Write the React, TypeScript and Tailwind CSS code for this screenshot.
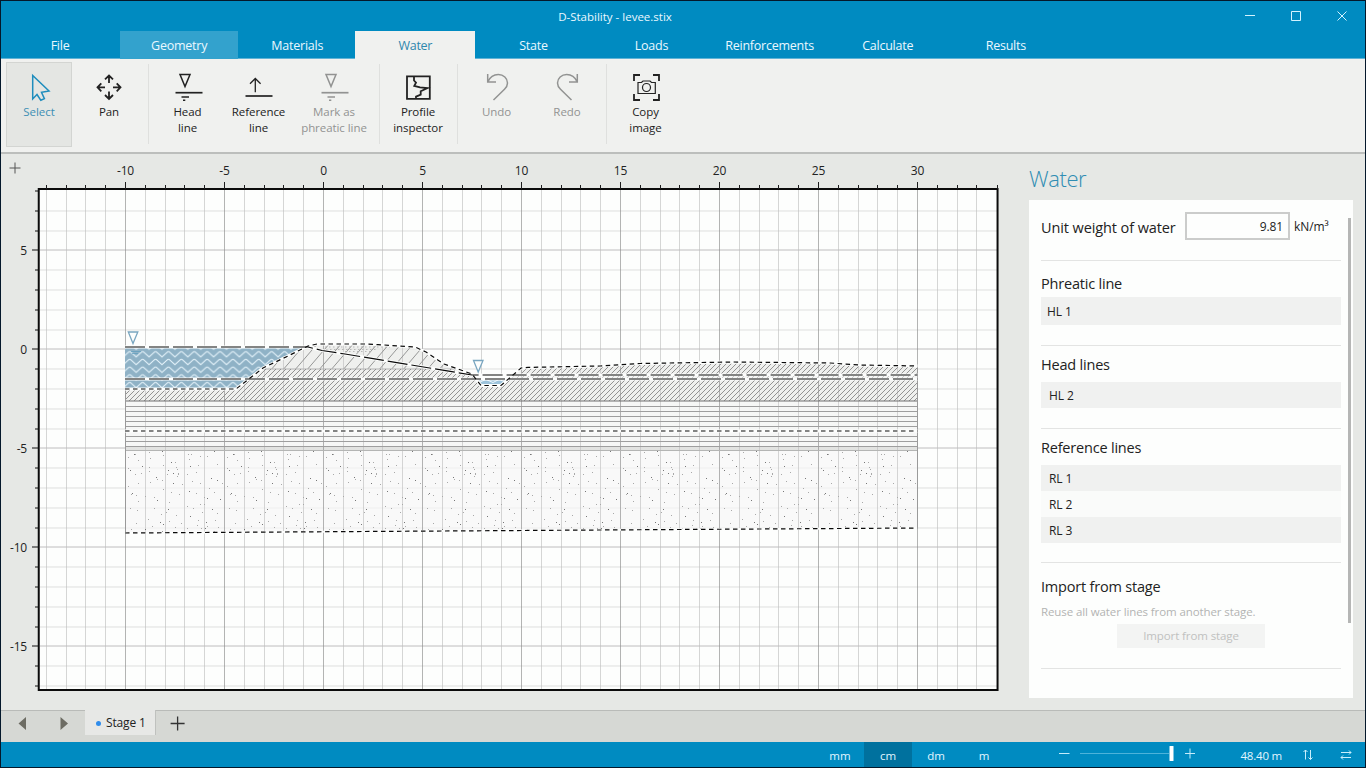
import React from "react";

const majorsX = [-10, -5, 0, 5, 10, 15, 20, 25, 30];
const majorsY = [5, 0, -5, -10, -15];
const toX = (m: number) => Math.round(323 + m * 19.8) + 0.5;
const toY = (m: number) => Math.round(349.4 - m * 19.8);
const range = (a: number, b: number) => Array.from({ length: b - a + 1 }, (_, i) => a + i);

const sandDots: [number, number][] = [
  [9, 4], [3, 7], [24, 2], [10, 4], [37, 1], [63, 4], [66, 4], [82, 6], [89, 1], [13, 10], [25, 8], [38, 5], [46, 12], [50, 12],
  [64, 9], [75, 6], [17, 16], [24, 17], [38, 15], [51, 17], [65, 16], [73, 15], [92, 14], [3, 18], [5, 20], [10, 24], [16, 23],
  [24, 21], [43, 20], [52, 19], [53, 23], [42, 24], [48, 23], [62, 24], [71, 22], [32, 29], [31, 27], [37, 30], [52, 26], [53, 24],
  [86, 28], [3, 36], [13, 33], [25, 32], [48, 33], [57, 34], [67, 31], [75, 33], [92, 30], [97, 33], [38, 39], [46, 42], [64, 41],
  [84, 38], [6, 44], [11, 45], [7, 43], [20, 46], [29, 47], [13, 51], [32, 50], [44, 52], [54, 44], [71, 43], [82, 48], [79, 47],
  [75, 54], [89, 42], [95, 49], [5, 58], [12, 60], [29, 58], [43, 59], [62, 56], [68, 58], [79, 54], [87, 59], [36, 64], [41, 62],
  [51, 65], [65, 66], [77, 62], [92, 63], [23, 69], [35, 72], [44, 71], [56, 73], [73, 70], [81, 72], [90, 70], [11, 73], [27, 76],
  [38, 74], [50, 77], [62, 78], [72, 75], [80, 78], [82, 76], [93, 77], [6, 79], [20, 79], [76, 78],
];

const surface =
  "M125 389H236L263 368L288 356L308 346L317 344H365L378 344.6L415 347L426 352L444 364L472 374L481 385.5H501L521 368L528 367.4L600 366L640 363.5L732 362L830 363L860 365L917.5 366";
const headLine = "M125 347H308L322 350.5L345 354L472 375H917.5";

function Section() {
  return (
    <svg className="block h-[556px] w-[1028px] shrink-0 font-['Open_Sans','Noto_Sans',sans-serif]" viewBox="1 154 1028 556">
      <defs>
        <pattern id="dense" width="5" height="5" patternUnits="userSpaceOnUse">
          <path d="M-1 6L6 -1M-1 1L1 -1M4 6L6 4" stroke="#898989" strokeWidth="0.9" />
        </pattern>
        <pattern id="wide" width="12" height="14" patternUnits="userSpaceOnUse">
          <path d="M-1.2 15.4L13.2 -1.4M-1.2 1.4L1.2 -1.4M10.8 15.4L13.2 12.6" stroke="#8b8b8b" strokeWidth="0.9" />
        </pattern>
        <pattern id="waves" x="123.3" y="351.4" width="12.9" height="7.7" patternUnits="userSpaceOnUse">
          {[-7.7, 0, 7.7].map((dy) => (
            <path
              key={dy}
              transform={`translate(0 ${dy})`}
              d="M-1 4.6L0 5.5L5.2 0.8Q6.45 -0.3 7.7 0.8L12.9 5.5L13.9 4.6"
              fill="none"
              stroke="#e6f4fb"
              strokeWidth="1.1"
            />
          ))}
        </pattern>
        <pattern id="sand" x="125" y="450" width="99" height="80" patternUnits="userSpaceOnUse">
          {sandDots.map(([x, y], i) => (
            <rect key={i} x={x} y={y} width="1" height="1" fill={i % 4 === 0 ? "#777" : "#a9a9a9"} />
          ))}
        </pattern>
      </defs>

      <path d="M15 162.500V173.500M9.500 168H20.500" stroke="#555" />
      <rect x="39" y="189" width="959" height="501" fill="#fdfefd" />

      {range(-17, 7).map((m) => (
        <path
          key={m}
          d={`M40 ${toY(m)}H997`}
          stroke={m % 5 === 0 ? "#a8a8a8" : "#cfcfcf"}
          strokeOpacity={m % 5 === 0 ? 0.75 : 0.65}
        />
      ))}
      <path d="M308 346L317 344H365L378 344.600L415 347L426 352L444 364L472 374L481 385.500H501L521 368L600 366L640 363.500L732 362L830 363L860 365L917.500 366V401H125V389H236L263 368Z" fill="#ebecea" fillOpacity="0.8" />
      <path d="M125 401H917.500V450H125Z" fill="#f5f6f5" fillOpacity="0.9" />
      <path d="M125 447H917.500V451H125Z" fill="#e2e3e1" />
      <path d="M125 451H917.500V528L125 533Z" fill="#f6f7f6" fillOpacity="0.7" />
      {range(-14, 33).map((m) => (
        <path key={m} d={`M${toX(m)} 190V689`} stroke={m % 5 === 0 ? "#8c8c8c" : "#bdbdbd"} strokeOpacity={m % 5 === 0 ? 0.65 : 0.62} />
      ))}

      <path d="M262 369L288 356L308 346L317 344H365L378 344.600L415 347L426 352L444 364L458 369Z" fill="url(#wide)" />
      <path d="M262 369H458" stroke="#b5b5b5" />
      <path d="M125 389H236L262 369H458L472 374L481 385.500H501L521 368L600 366L640 363.500L732 362L830 363L860 365L917.500 366V401H125Z" fill="url(#dense)" />
      <path d="M325 347H390M322 349.500H378M345 351.500H372" stroke="#aaa" strokeWidth="0.8" strokeDasharray="1.500 2.500" />
      <path d="M125 451H917.500V528L125 533Z" fill="url(#sand)" />
      <path d="M125 401H917.500" stroke="#707070" strokeWidth="1.200" />
      {[406.5, 411.5, 416.5, 421.5, 426.5, 436.5, 441.5, 446.5].map((y) => (
        <path key={y} d={`M125 ${y}H917.5`} stroke="#9e9e9e" />
      ))}
      <path d="M125 450.500H917.500" stroke="#b4b5b4" />
      <path d="M125.500 347V533M917.500 367V528" stroke="#9a9a9a" />

      <path d="M125 347H306L263 368L236 388.500H125Z" fill="#8fb2c6" />
      <path d="M125 347H306L263 368L236 388.500H125Z" fill="url(#waves)" />
      <path d="M473 375.500H511L501 385H482Z" fill="#fdfefd" />
      <path d="M474 379H508L501 384.500H482Z" fill="#9cc3db" />
      <path d="M475 380.500L480 382L486 379.500L493 382.500L499 379.500L504 381.500" fill="none" stroke="#eef8fd" />

      <g fill="none" stroke="#fdfefd" strokeWidth="3">
        <path d={headLine} />
        <path d="M125 379H917.500M125 431H917.500" />
        <path d={surface} />
        <path d="M125 533L917.500 528" strokeWidth="2" />
      </g>
      <g fill="none" stroke="#0a0a0a" strokeWidth="1.200">
        <path d={headLine} strokeDasharray="20 4" />
        <path d="M125 379H917.500" strokeDasharray="20 4" />
        <path d="M125 431H917.500" strokeDasharray="4.500 3.500" />
        <path d={surface} strokeDasharray="4.500 3.500" />
        <path d="M125 533L917.500 528" strokeDasharray="4.500 3.500" />
      </g>
      <path d="M131 351.500H141M132 353.500H138" stroke="#5d9dbd" strokeOpacity="0.7" />
      <g fill="#fdfefd" stroke="#79a6c0" strokeWidth="1.300">
        <path d="M128.300 332H137.800L133 343.500Z" />
        <path d="M473.500 360.500H483L478.200 372Z" />
      </g>

      <rect x="38.750" y="189" width="958.800" height="501" fill="none" stroke="#0b0b0b" strokeWidth="2" />
      {range(-14, 33).map((m) => (
        <path key={m} d={`M${toX(m)} ${m % 5 === 0 ? 182 : 185}V189`} stroke="#1d1d1d" />
      ))}
      <path d="M997.500 185V189" stroke="#1d1d1d" />
      {range(-17, 8).map((m) => (
        <path key={m} d={`M${m % 5 === 0 ? 32 : 35} ${toY(m)}H39`} stroke="#111" />
      ))}
      <g fontSize="12" fill="#222" letterSpacing="-0.2">
        {majorsX.map((m) => (
          <text key={m} x={toX(m)} y="175" textAnchor="middle">
            {m}
          </text>
        ))}
        {majorsY.map((m) => (
          <text key={m} x="27" y={toY(m) + 5} textAnchor="end">
            {m}
          </text>
        ))}
      </g>
    </svg>
  );
}

function Tool({ label, className, children }: { label: React.ReactNode; className: string; children: React.ReactNode }) {
  return (
    <button className={`flex h-[85px] shrink-0 flex-col items-center pt-[9px] text-[11.5px] leading-4 tracking-[-0.06px] ${className}`}>
      <svg className="size-8 shrink-0 overflow-visible" viewBox="0 0 32 32" fill="none" stroke="currentColor" strokeWidth="1.5">
        {children}
      </svg>
      <span className="mt-px whitespace-nowrap text-center">{label}</span>
    </button>
  );
}

const Sep = ({ className }: { className: string }) => <div className={`h-20 w-px shrink-0 bg-[#dfe0de] ${className}`} />;

const phreaticIcon = (
  <>
    <path d="M8 3.500H18L13 15.500Z" />
    <path d="M3.500 21.700H30.500" strokeWidth="1.700" />
    <path d="M9.500 26H17M11 29.300H13.300" />
  </>
);

const hook = <path d="M6.700 3V11H15M6.900 10.800C9 6 13 3.500 17.300 3.500C22.500 3.500 26.500 7.300 26.500 12C26.500 14.800 25.300 16.500 23.500 18.300L12.500 29" />;

function Ribbon() {
  return (
    <div className="flex h-[95px] shrink-0 items-start border-b-2 border-[#bcbebc] bg-[#f0f1ef] pl-[5px] pt-[3px] text-[#222]">
      <Tool label="Select" className="w-[66px] border border-[#d3d5d2] bg-[#e4e6e3] pt-[8px]! text-[#3c8fb5]">
        <path d="M9.700 4.500V28L14 23.500L17.800 29.200L21.400 27.600L18.500 21.300L26 20Z" stroke="#1e8dbd" />
      </Tool>
      <Tool label="Pan" className="w-[74px]">
        <path
          d="M16 4.500V12M16 20.500V28M4.500 16.300H12M20 16.300H27.500M12 8.300L16 4.500L20 8.300M12 24L16 28L20 24M8.300 12.300L4.500 16.300L8.300 20.300M23.700 12.300L27.500 16.300L23.700 20.300"
          strokeWidth="1.800"
        />
      </Tool>
      <Sep className="ml-0.5 mt-0.5" />
      <Tool label={<>Head<br />line</>} className="w-[77px]">{phreaticIcon}</Tool>
      <Tool label={<>Reference<br />line</>} className="w-[65px]">
        <path d="M2.500 25H29.500" strokeWidth="1.700" />
        <path d="M12.300 21.300V7.500M7 12.800L12.300 7.500L17.600 12.800" strokeWidth="1.300" />
      </Tool>
      <Tool label={<>Mark as<br />phreatic line</>} className="w-[86px] text-[#929392]">{phreaticIcon}</Tool>
      <Sep className="ml-0.5 mt-0.5" />
      <Tool label={<>Profile<br />inspector</>} className="w-[76px]">
        <path d="M5 5.300H27.800V27.900H5Z" strokeWidth="1.800" />
        <path d="M12 5V9.500L14 11.700L12.300 14.800L18 16.300L25.500 17L18.700 20.300V23.700L14 25.700V28" strokeWidth="1.800" />
      </Tool>
      <Sep className="ml-px mt-0.5" />
      <Tool label="Undo" className="w-[77px] text-[#929392]">{hook}</Tool>
      <Tool label="Redo" className="w-[64px] text-[#929392]">
        <g transform="matrix(-1 0 0 1 33 0)">{hook}</g>
      </Tool>
      <Sep className="ml-[7px] mt-0.5" />
      <Tool label={<>Copy<br />image</>} className="w-[77px]">
        <path d="M4 10V4H10M23 4H29V10M29 23V29H23M10 29H4V23" strokeWidth="1.800" />
        <path d="M8 11.500H11.500L13 10H20L21.500 11.500H25.300V22.500H8Z" strokeWidth="1.200" />
        <circle cx="16.500" cy="16.500" r="4" strokeWidth="1.200" />
      </Tool>
    </div>
  );
}

const tabs = ["File", "Geometry", "Materials", "Water", "State", "Loads", "Reinforcements", "Calculate", "Results"];

function Header() {
  return (
    <div className="flex h-[58px] shrink-0 flex-col border-b border-[#5fb3d6] bg-[#008bc1] text-[#eaf8ff]">
      <div className="flex h-[30px] shrink-0 items-center">
        <div className="w-[1228px] pt-px text-center text-[11.5px]">D-Stability - levee.stix</div>
        <svg className="ml-0.5 h-[30px] w-[134px]" viewBox="1231 1 134 30" fill="none" stroke="#d3f3ff">
          <path d="M1245 15.500H1255M1291.500 11.500H1300.500V20.500H1291.500ZM1337.500 11.500L1346.500 20.500M1346.500 11.500L1337.500 20.500" />
        </svg>
      </div>
      <div className="flex h-7 shrink-0 pl-px text-[12.500px] tracking-[-0.25px]">
        {tabs.map((t) => (
          <button
            key={t}
            className={`h-7 shrink-0 pt-[3px] ${t === "Water" ? "-mx-px w-[120.100px] bg-[#f0f1ef] text-[#2f87ad]" : "w-[118.100px]"} ${t === "Geometry" ? "bg-[#33a2cd]" : ""} ${t === "File" ? "pr-0.5" : ""}`}
          >
            {t}
          </button>
        ))}
      </div>
    </div>
  );
}

const Heading = ({ children }: { children: string }) => (
  <h2 className="h-6 text-[14.500px] leading-6 tracking-[-0.2px] text-[#222]">{children}</h2>
);
const Rule = ({ className }: { className: string }) => <div className={`h-px w-[300px] bg-[#e3e4e3] ${className}`} />;

function Panel() {
  return (
    <aside className="flex w-[324px] shrink-0 flex-col">
      <h1 className="h-[46px] pt-[8px] text-[22px] font-light leading-8 tracking-[-0.4px] text-[#2f8db3]">Water</h1>
      <div className="flex h-[498px] justify-between bg-[#fdfefd] pl-3 pr-0.5">
        <div className="flex w-[300px] flex-col text-[12px] tracking-[-0.1px] text-[#222]">
          <div className="mt-3 flex h-7 items-center">
            <span className="w-[144px] whitespace-nowrap pt-[3px] text-[14.500px]">Unit weight of water</span>
            <span className="flex h-7 w-[105px] items-center justify-end border-2 border-[#cbcccb] pr-[5px] pt-0.5 text-[12px]">9.81</span>
            <span className="pl-1 pt-0.5 text-[12px]">kN/m³</span>
          </div>
          <Rule className="mt-5" />
          <div className="mt-[11px]"><Heading>Phreatic line</Heading></div>
          <div className="mt-px h-7 bg-[#f0f1f0] pl-1.5 leading-[29px]">HL 1</div>
          <Rule className="mt-5" />
          <div className="mt-[7px]"><Heading>Head lines</Heading></div>
          <div className="mt-[5px] h-[26px] bg-[#f0f1f0] pl-2 leading-[27px]">HL 2</div>
          <Rule className="mt-5" />
          <div className="mt-[7px]"><Heading>Reference lines</Heading></div>
          <div className="mt-[5px] h-[26px] bg-[#f0f1f0] pl-2 leading-[27px]">RL 1</div>
          <div className="h-[26px] bg-[#fafbfa] pl-2 leading-[27px]">RL 2</div>
          <div className="h-[26px] bg-[#f0f1f0] pl-2 leading-[27px]">RL 3</div>
          <Rule className="mt-[19px]" />
          <div className="mt-3"><Heading>Import from stage</Heading></div>
          <p className="mt-1 h-[18px] text-[11.500px] leading-[18px] text-[#b3b4b3]">Reuse all water lines from another stage.</p>
          <button className="ml-[76px] mt-[3px] h-6 w-[148px] bg-[#f3f4f3] text-[11.500px] text-[#c0c1c0]">Import from stage</button>
          <Rule className="mt-5" />
        </div>
        <div className="mt-[18px] h-[405px] w-[3px] bg-[#b5b6b5]" />
      </div>
    </aside>
  );
}

function StageBar() {
  return (
    <div className="flex h-8 shrink-0 items-start border-t border-[#b9bbb8] bg-[#d6d8d4]">
      <svg className="h-6 w-[84px]" viewBox="1 711 84 24" fill="#6d6c63">
        <path d="M26 717V730L18.500 723.500ZM60.500 717V730L68 723.500Z" />
      </svg>
      <button className="-mt-px flex h-[25px] w-[71px] items-center gap-[5px] border-r border-[#bfc1be] bg-[#e7e8e6] pl-[11px] pt-px text-[12px] tracking-[-0.15px] text-[#222]">
        <span className="size-[5px] shrink-0 rounded-full bg-[#2f8ceb]" />
        <span className="whitespace-nowrap">Stage 1</span>
      </button>
      <svg className="h-6 w-11" viewBox="156 711 44 24" fill="none" stroke="#333" strokeWidth="1.300">
        <path d="M177.600 716.500V730.500M170.600 723.500H184.600" />
      </svg>
    </div>
  );
}

function StatusBar() {
  return (
    <div className="flex h-[25px] shrink-0 items-stretch bg-[#008bc1] pl-[815px] text-[11.500px] text-[#e2f6ff]">
      {["mm", "cm", "dm", "m"].map((u) => (
        <button key={u} className={`w-12 shrink-0 pt-0.5 ${u === "cm" ? "bg-[#00719e]" : ""}`}>
          {u}
        </button>
      ))}
      <svg className="ml-[46px] h-[25px] w-[156px] shrink-0" viewBox="1054 742 156 25" fill="none" stroke="#c4ecfb">
        <path d="M1059 753.500H1069.500M1185 753.500H1195M1190 748.500V758.500" />
        <path d="M1080 753.500H1169" stroke="#4db3da" />
        <rect x="1169.500" y="746" width="4" height="15" rx="0.500" fill="#fff" stroke="none" />
      </svg>
      <span className="flex w-[72px] shrink-0 items-center justify-end whitespace-nowrap pt-0.5 tracking-[-0.2px]">48.40 m</span>
      <svg className="ml-[9px] h-[25px] w-[74px] shrink-0" viewBox="1291 742 74 25" fill="none" stroke="#c9effc">
        <path d="M1305.500 759.500V750M1303.500 752L1305.500 750L1307.500 752M1310.500 750V759.500M1308.500 757.500L1310.500 759.500L1312.500 757.500" />
        <path d="M1341 752.500H1351M1349 750.500L1351 752.500L1349 754.500M1351 757.500H1341M1343 755.500L1341 757.500L1343 759.500" />
      </svg>
    </div>
  );
}

export default function App() {
  return (
    <div className="flex h-[768px] w-[1366px] flex-col overflow-hidden border border-[#04182b] bg-[#e6e8e5] font-['Open_Sans','Noto_Sans',sans-serif]">
      <Header />
      <Ribbon />
      <div className="flex h-[556px] shrink-0">
        <Section />
        <Panel />
      </div>
      <StageBar />
      <StatusBar />
    </div>
  );
}
